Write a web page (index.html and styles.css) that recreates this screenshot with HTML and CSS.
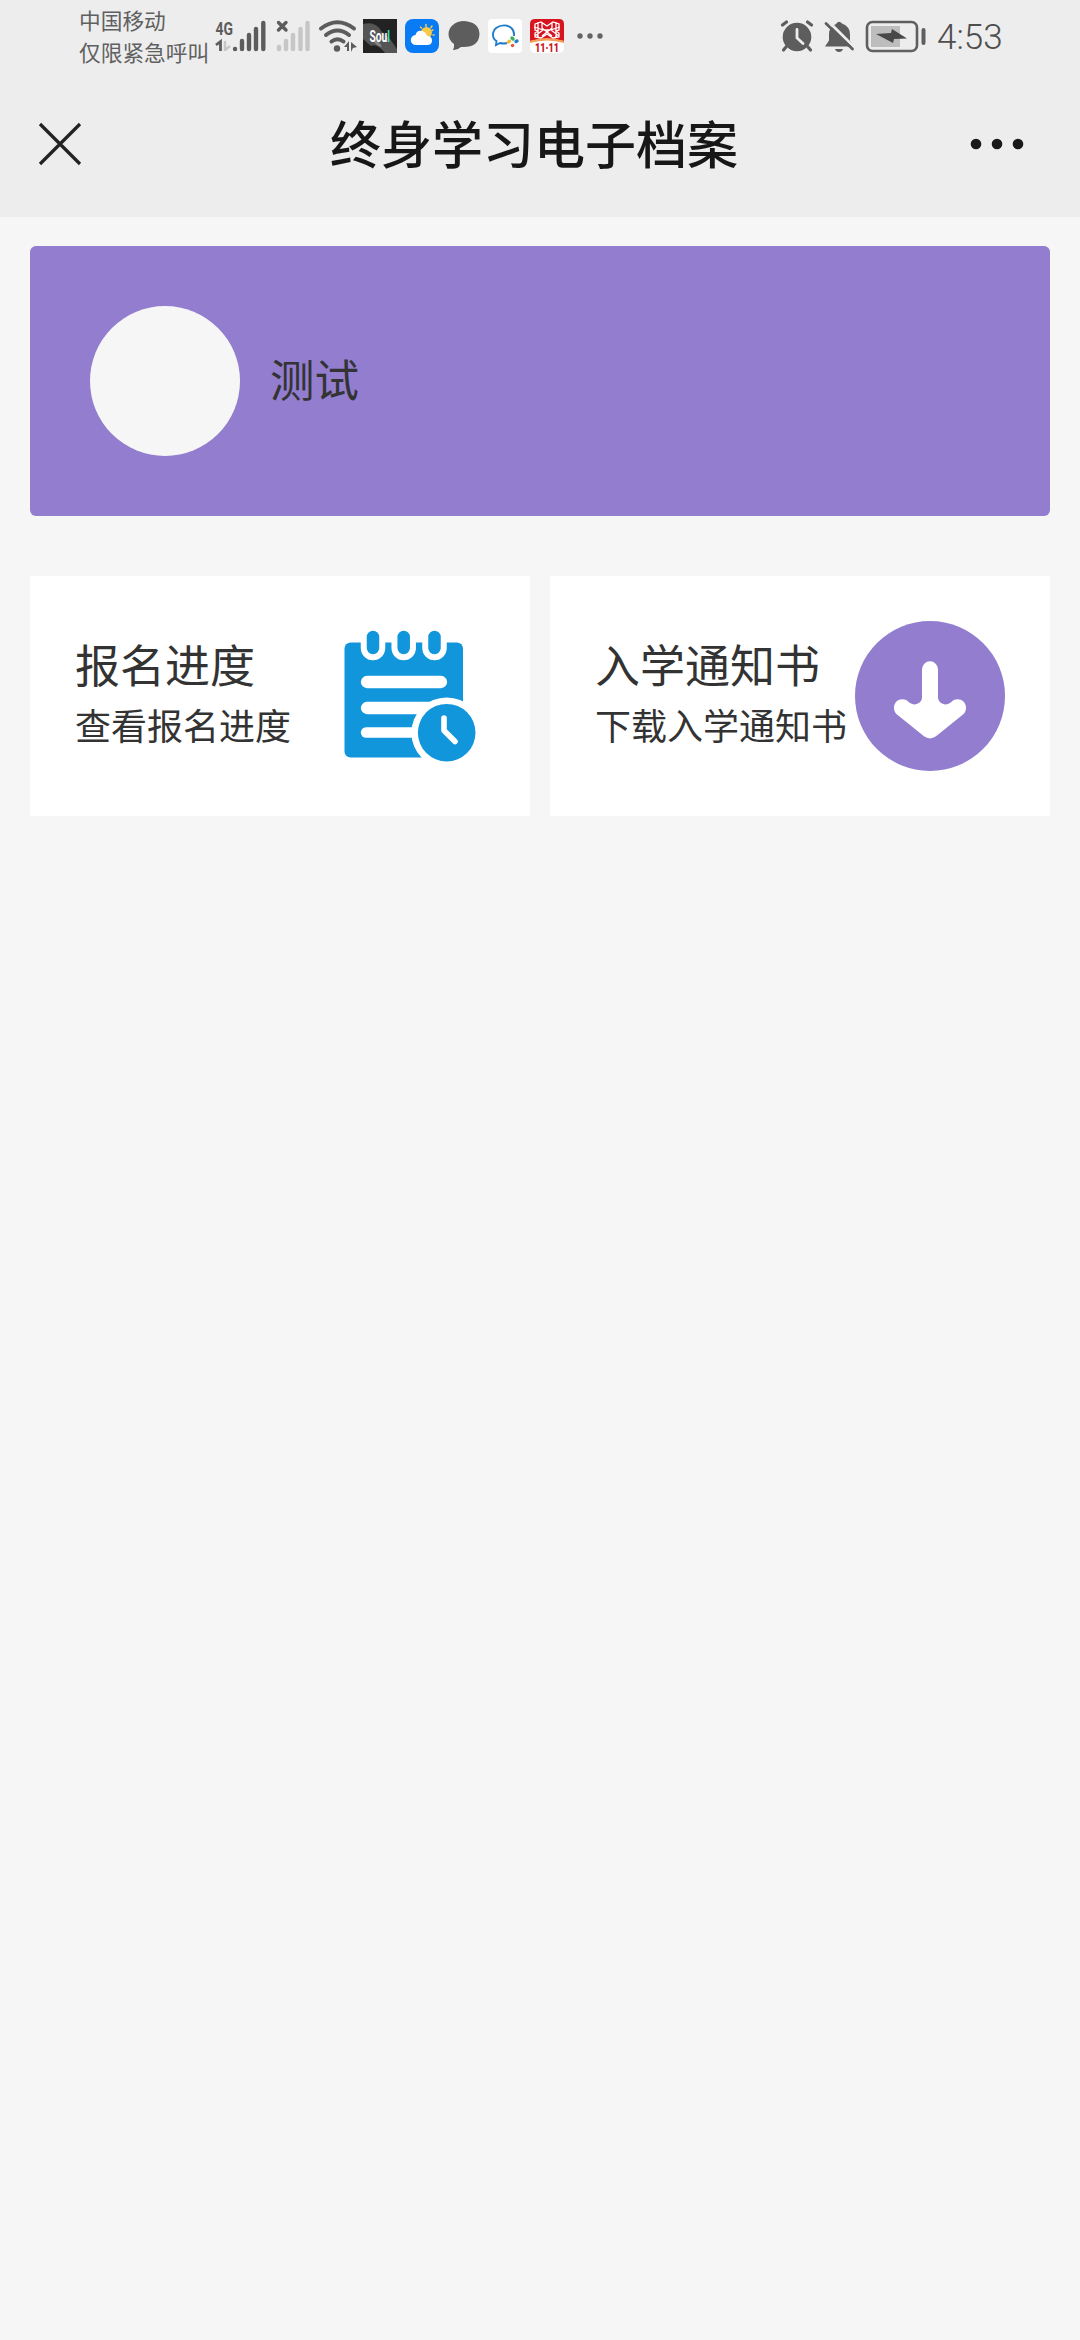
FILE: index.html
```html
<!DOCTYPE html>
<html lang="zh-CN">
<head>
<meta charset="utf-8">
<title>终身学习电子档案</title>
<link rel="stylesheet" href="styles.css">
</head>
<body>
<header class="top">
  <div class="status">
    <div class="carrier"><span>中国移动</span><span>仅限紧急呼叫</span></div>
    <svg class="signal" width="60" height="75" viewBox="212 0 60 75">
      <text class="net" x="215.500" y="34.500" textLength="17.500" lengthAdjust="spacingAndGlyphs">4G</text>
      <path d="M216 45l4.500-3.500V51" fill="none" stroke="#5c5c5c" stroke-width="2.800"/>
      <path d="M225 41v10M225 50l5-4" fill="none" stroke="#c6c6c6" stroke-width="2.400"/>
      <g stroke="#5c5c5c" stroke-width="4.400" stroke-linecap="round"><path d="M235 49h.1M242 41v8M249 35v14M256 29v20M263.300 23v26"/></g>
    </svg>
    <svg class="signal" width="44" height="75" viewBox="272 0 44 75">
      <path d="M278.500 22.500l7.500 7.500M286 22.500l-7.500 7.500" stroke="#5c5c5c" stroke-width="3.400" stroke-linecap="round"/>
      <path d="M279 47v2M286 41v8M293 35v14M300.500 29v20M307.500 23v26" stroke="#c6c6c6" stroke-width="4.400" stroke-linecap="round"/>
    </svg>
    <svg class="wifi" width="47" height="75" viewBox="316 0 47 75">
      <g fill="none" stroke="#5c5c5c" stroke-width="4" stroke-linecap="round"><path d="M321 28.500Q337.500 16 354 28.500M326 35q11.500-9 23 0M331.500 41.500q6-4.500 12 0"/></g>
      <circle cx="337" cy="48.500" r="3.200" fill="#5c5c5c"/>
      <path d="M344 47l5-6v10h-2v-4zM351 42l6 5-4 1-2 4z" fill="#5c5c5c"/>
    </svg>
    <svg width="34" height="34" viewBox="0 0 34 34">
      <path d="M0 0h34v34H0z" fill="#222"/>
      <path d="M0 5Q13 2 18 12L27 20 34 30V34H22Q14 24 8 27L0 20z" fill="#555"/><path d="M10 21q7 1 9 7-6-1-9-7z" fill="#888"/>
      <text class="soul" transform="translate(6.500 22.500) scale(.64 1)">Sou<tspan fill="#35dfc0">l</tspan></text>
    </svg>
    <svg class="app" width="34" height="34" viewBox="0 0 34 34">
      <rect width="34" height="34" rx="8" fill="#087bf5"/>
      <g stroke="#eccb62" stroke-width="1.500" stroke-linecap="round"><path d="M21 5.500v2M27 7l-1 1.500M15.500 8l1 1M28 11l-1 .5M28 16h1"/></g>
      <circle cx="21.500" cy="13.500" r="5.500" fill="#f8ca48"/>
      <path d="M11 26a5 5 0 0 1-.5-10Q12 11 17 12q4 1 5 5 5 0 5 4.500 0 4.500-5 4.500z" fill="#fff"/>
    </svg>
    <svg class="chat" width="32" height="34" viewBox="0 0 32 34">
      <path d="M16 2C7 2 .5 8 .5 15c0 4 2 7.500 5.500 10q.5 3-1 6 4 .5 8-3Q31 29 31.500 15 31 3 16 2z" fill="#5d5d5d"/>
    </svg>
    <svg class="app" width="34" height="34" viewBox="0 0 34 34">
      <rect width="34" height="34" rx="4" fill="#fff"/>
      <path d="M26 17C27.500 2.500 5 3.500 5 16q0 4 3.500 6L8 26l4-2q4 1 7 0" fill="none" stroke="#237dcb" stroke-width="1.900"/>
      <g stroke-width="3.400" stroke-linecap="round"><path d="M24 19l1 1" stroke="#38b45b"/><path d="M28 22.500l1-.5" stroke="#2680c7"/><path d="M24.500 26.500h.1" stroke="#e75a3c"/><path d="M20.500 23l1-.8" stroke="#efbd35"/></g>
    </svg>
    <svg class="app" width="34" height="34" viewBox="0 0 34 34">
      <rect width="34" height="34" rx="5" fill="#fff"/>
      <path d="M0 22V5q0-5 5-5h24q5 0 5 5v17q-17-4-34 0z" fill="#d81420"/>
      <path d="M0 22q17-6 34 0v2q-17-5-34 0z" fill="#f4a05a"/>
      <g fill="none" stroke="#fff" stroke-width="1.300"><path d="M5 5l6-2 6 4 6-4 6 2v6l-3 1 3 2v4l-6 1-6-4-6 4-6-1v-4l3-2-3-1zM8 3v16M26 3v16M4 8l9 3-8 6M30 8l-9 3 8 6M12 3v6l10 8M22 3v6l-10 8M14 11h6"/></g>
      <text class="sale" x="5" y="33" textLength="24" lengthAdjust="spacingAndGlyphs">11·11</text>
    </svg>
    <svg class="overflow" width="28" height="34" viewBox="0 0 28 34"><g fill="#646464"><circle cx="4" cy="17" r="2.700"/><circle cx="14" cy="17" r="2.700"/><circle cx="24" cy="17" r="2.700"/></g></svg>
    <div class="right">
      <svg width="34" height="34" viewBox="780 19 34 34">
        <path d="M782.500 25l4-3M811.500 25l-4-3M786 47l-2.500 3M808 47l2.500 3" stroke="#5d5d5d" stroke-width="3.200" stroke-linecap="round"/>
        <circle cx="797" cy="37" r="14.300" fill="#5d5d5d"/><path d="M797 29.500v8.500l6 5.500" fill="none" stroke="#ededed" stroke-width="2.800" stroke-linecap="round"/>
      </svg>
      <svg class="bell" width="32" height="34" viewBox="824 19 32 34">
        <path d="M825 46.500l4-6V34q0-7 7-10 3-4 6-.5 8 3 8 11v6l3.500 6zM835 49h8q-1 3-4 3t-4-3z" fill="#5d5d5d"/>
        <path d="M828 21l28 28" stroke="#ededed" stroke-width="3"/><path d="M826 23.500l26.500 25.500" stroke="#5d5d5d" stroke-width="2.800" stroke-linecap="round"/>
      </svg>
      <svg class="battery" width="62" height="34" viewBox="865 19 62 34">
        <rect x="867" y="22" width="50" height="29" rx="5.500" fill="none" stroke="#5f5f5f" stroke-width="2.600"/>
        <path d="M871 26h29v21h-29z" fill="#bdbdbd"/><path d="M876 34l15-1 1-4 15 9.500-13 .5-1 4z" fill="#484848"/>
        <path d="M923.500 30v13" stroke="#5f5f5f" stroke-width="4" stroke-linecap="round"/>
      </svg>
      <time class="clock">4:53</time>
    </div>
  </div>
  <nav class="nav">
    <svg width="44" height="44" viewBox="0 0 44 44"><path d="M2 2l40 40M42 2L2 42" stroke="#222" stroke-width="3.200"/></svg>
    <h1 class="title">终身学习电子档案</h1>
    <svg width="54" height="12" viewBox="0 0 54 12"><g fill="#191919"><circle cx="6" cy="6" r="5.300"/><circle cx="27" cy="6" r="5.300"/><circle cx="48" cy="6" r="5.300"/></g></svg>
  </nav>
</header>
<main class="page">
  <section class="profile"><div class="avatar"></div><span class="name">测试</span></section>
  <section class="cards">
    <a class="card">
      <div class="copy"><h2>报名进度</h2><p>查看报名进度</p></div>
      <svg class="icon" width="150" height="150" viewBox="335 621 150 150">
        <rect x="344.500" y="642.500" width="118.500" height="115" rx="6" fill="#1296db"/>
        <g stroke-linecap="round">
          <path d="M373 637v11M403.700 637v11M434.500 637v11" stroke="#fff" stroke-width="24.500"/>
          <path d="M373 637v11M403.700 637v11M434.500 637v11" stroke="#1296db" stroke-width="12.500"/>
          <path d="M367 682h74M367 708h70" stroke="#fff" stroke-width="12.300"/><path d="M366 732.500h60" stroke="#fff" stroke-width="10.300"/>
        </g>
        <circle cx="446.700" cy="732.700" r="35.300" fill="#fff"/><circle cx="446.700" cy="732.700" r="28.800" fill="#1296db"/>
        <path d="M444 718v12.500l11 11" fill="none" stroke="#fff" stroke-width="5.600" stroke-linecap="round" stroke-linejoin="round"/>
      </svg>
    </a>
    <a class="card">
      <div class="copy"><h2>入学通知书</h2><p>下载入学通知书</p></div>
      <svg class="icon" width="150" height="150" viewBox="855 621 150 150">
        <circle cx="930" cy="696" r="75" fill="#927dcf"/>
        <path d="M930 661.300a8 8 0 0 1 8 8V698Q938.500 703 945 704.500 949 704.500 953 700.500C959 697 966 701 966 707.500Q966 712 963 714.500L936 736.300Q930 740.500 924 736.300L897 714.500Q894 712 894 707.500C894 701 901 697 907 700.500Q911 704.500 915 704.500 921.500 703 922 698V669.300a8 8 0 0 1 8-8z" fill="#fff"/>
      </svg>
    </a>
  </section>
</main>
</body>
</html>
```
FILE: styles.css
```css
* { box-sizing: border-box; }
body {
  margin: 0;
  min-height: 2340px;
  background: #f6f6f6;
  color: #333;
  font-family: "Noto Sans CJK SC", sans-serif;
}
h1, h2, p { margin: 0; font-weight: 400; }
svg { display: block; flex: none; overflow: visible; }
.top { height: 217px; background: #ededed; }
.status { display: flex; align-items: center; height: 72px; padding-left: 79px; color: #606060; }
.signal, .wifi { margin-top: 3px; }
.carrier { display: flex; flex-direction: column; width: 133px; font-size: 21.7px; line-height: 32px; white-space: nowrap; }
.net { font: 700 19px "Roboto", sans-serif; fill: #5c5c5c; }
.soul { font: 700 16px "Roboto", sans-serif; fill: #fff; }
.sale { font: 900 12px "Roboto", sans-serif; fill: #c9151e; }
.app { margin-left: 8px; }
.chat { margin-left: 9px; }
.overflow { margin-left: 12px; }
.right { display: flex; align-items: center; margin-left: auto; padding-right: 77px; }
.bell { margin-left: 10px; }
.battery { margin-left: 9px; }
.clock { width: 66px; margin-left: 10px; padding-top: 4px; font: 300 35px/36px "Roboto", sans-serif; color: #4e4e4e; }
.nav { display: flex; align-items: center; justify-content: space-between; height: 145px; padding: 0 56px 0 38px; }
.nav svg { margin-bottom: 1px; }
.title { margin-left: 16px; padding-bottom: 5px; font-size: 51px; font-weight: 500; line-height: 72px; color: #171717; }
.page { padding: 29px 30px; }
.profile { display: flex; align-items: center; gap: 30px; height: 270px; padding-left: 60px; border-radius: 6px; background: #927dcf; }
.avatar { width: 150px; height: 150px; border-radius: 50%; background: #f6f6f6; }
.name { padding-bottom: 6px; font-size: 44.5px; line-height: 60px; }
.cards { display: grid; grid-template-columns: 1fr 1fr; gap: 20px; margin-top: 60px; }
.card { display: flex; align-items: center; justify-content: space-between; height: 240px; padding: 0 45px; background: #fff; }
.copy { width: 260px; margin-right: -5px; padding-bottom: 5px; white-space: nowrap; }
.copy h2 { font-size: 45px; line-height: 60px; }
.copy p { font-size: 36px; line-height: 60px; }
```
